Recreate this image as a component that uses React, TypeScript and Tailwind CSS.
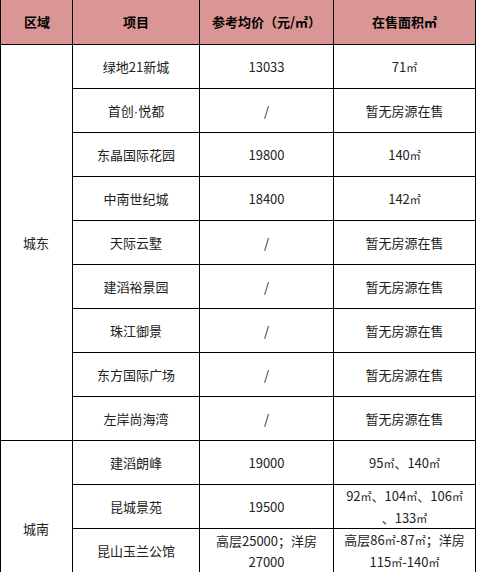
import React from "react";

interface Row {
  name: React.ReactNode;
  price: React.ReactNode;
  area: React.ReactNode;
}

const M2 = () => <span className="text-[11px]">㎡</span>;
const Dot = () => <span style={{ fontFamily: '"Liberation Sans", sans-serif' }}>·</span>;

const east: Row[] = [
  { name: "绿地21新城", price: "13033", area: <>71<M2 /></> },
  { name: <>首创<Dot />悦都</>, price: "/", area: "暂无房源在售" },
  { name: "东晶国际花园", price: "19800", area: <>140<M2 /></> },
  { name: "中南世纪城", price: "18400", area: <>142<M2 /></> },
  { name: "天际云墅", price: "/", area: "暂无房源在售" },
  { name: "建滔裕景园", price: "/", area: "暂无房源在售" },
  { name: "珠江御景", price: "/", area: "暂无房源在售" },
  { name: "东方国际广场", price: "/", area: "暂无房源在售" },
  { name: "左岸尚海湾", price: "/", area: "暂无房源在售" },
];

const south: Row[] = [
  { name: "建滔朗峰", price: "19000", area: <>95<M2 />、140<M2 /></> },
  {
    name: "昆城景苑",
    price: "19500",
    area: <>92<M2 />、104<M2 />、106<M2 /><br />、133<M2 /></>,
  },
  {
    name: "昆山玉兰公馆",
    price: <>高层25000；洋房<br />27000</>,
    area: <>高层86<M2 />-87<M2 />；洋房<br />115<M2 />-140<M2 /></>,
  },
  { name: "中海御景湾", price: "/", area: "暂无房源在售" },
];

const cell = "bg-white flex items-center justify-center text-center px-1 leading-[21px]";
const head = "bg-[#da9694] flex items-center justify-center font-bold text-black";

export default function App() {
  return (
    <div
      className="w-[477px] h-[572px] overflow-hidden bg-white text-[13px] text-[#222]"
      style={{ fontFamily: '"Noto Sans CJK SC", "Noto Sans", sans-serif' }}
    >
      <div className="grid w-[476px] grid-cols-[71px_126px_133px_141px] grid-rows-[44px] auto-rows-[43px] gap-px bg-black px-px pb-px">
        <div className="bg-[#da9694] flex items-center pl-[23px] font-bold text-black whitespace-nowrap">区域</div>
        <div className={head}>项目</div>
        <div className={head}>参考均价（元/㎡）</div>
        <div className={head}>在售面积㎡</div>

        <div className="bg-white row-span-9 flex items-center pl-[22px]">城东</div>
        {east.map((r, i) => (
          <React.Fragment key={"e" + i}>
            <div className={cell}><span>{r.name}</span></div>
            <div className={cell}><span>{r.price}</span></div>
            <div className={cell}><span>{r.area}</span></div>
          </React.Fragment>
        ))}

        <div className="bg-white row-span-4 flex items-center pl-[22px]">城南</div>
        {south.map((r, i) => (
          <React.Fragment key={"s" + i}>
            <div className={cell}><span>{r.name}</span></div>
            <div className={cell}><span>{r.price}</span></div>
            <div className={cell}><span>{r.area}</span></div>
          </React.Fragment>
        ))}
      </div>
    </div>
  );
}
